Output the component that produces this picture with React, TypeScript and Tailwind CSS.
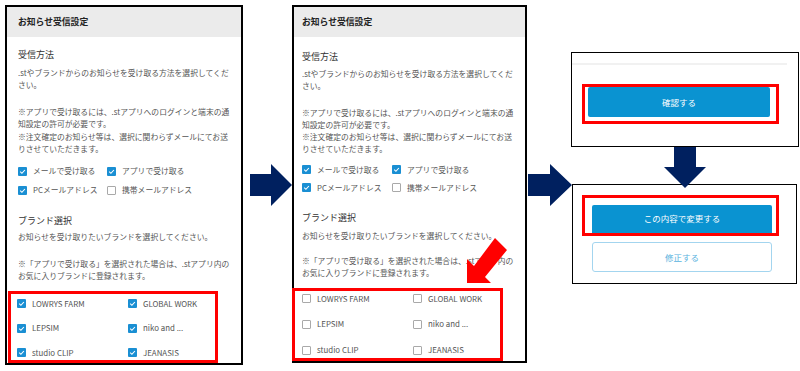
import React from 'react';

type PanelProps = {
  brandsChecked: boolean;
  compact?: boolean;
};

const font = { fontFamily: '"Noto Sans CJK JP", "Noto Sans", sans-serif' };

const CheckBox: React.FC<{ checked: boolean }> = ({ checked }) =>
  checked ? (
    <span className="flex h-[9px] w-[9px] shrink-0 items-center justify-center rounded-[1px] bg-[#1a8fd3]">
      <svg width="9" height="9" viewBox="0 0 9 9">
        <path d="M2.2 4.7 L3.9 6.3 L6.9 3" fill="none" stroke="#fff" strokeWidth="1.1" />
      </svg>
    </span>
  ) : (
    <span className="h-[9px] w-[9px] shrink-0 rounded-[1px] border border-[#a9a9a9] bg-white" />
  );

const Check: React.FC<{ checked: boolean; label: string }> = ({ checked, label }) => (
  <div className="flex items-center gap-[6px] whitespace-nowrap">
    <CheckBox checked={checked} />
    <span>{label}</span>
  </div>
);

const BRANDS = ['LOWRYS FARM', 'GLOBAL WORK', 'LEPSIM', 'niko and ...', 'studio CLIP', 'JEANASIS'];

const Panel: React.FC<PanelProps> = ({ brandsChecked, compact }) => (
  <div
    className={`mt-[5px] flex shrink-0 flex-col border-2 border-black bg-white text-[#555] ${
      compact ? 'h-[358px] w-[235px]' : 'h-[360px] w-[238px]'
    }`}
    style={font}
  >
    <div className={`flex h-[30px] items-center bg-[#ebebeb] text-[8.8px] font-bold text-[#222] ${compact ? 'pl-[8px]' : 'pl-[11px]'}`}>
      お知らせ受信設定
    </div>
    <div className={`flex flex-col whitespace-nowrap text-[7.8px] ${compact ? 'pl-[8px] leading-[12px]' : 'pl-[11px] leading-[12.5px]'}`}>
      <div className={`text-[9px] leading-[14px] text-[#333] ${compact ? 'mt-[13px]' : 'mt-[11px]'}`}>受信方法</div>
      <p className={compact ? 'mt-[4px]' : 'mt-[5px]'}>
        .stやブランドからのお知らせを受け取る方法を選択してくだ
        <br />
        さい。
      </p>
      <p className={compact ? 'mt-[15px]' : 'mt-[14px]'}>
        ※アプリで受け取るには、.stアプリへのログインと端末の通
        <br />
        知設定の許可が必要です。
        <br />
        ※注文確定のお知らせ等は、選択に関わらずメールにてお送
        <br />
        りさせていただきます。
      </p>
      <div className={`flex flex-col gap-[5px] ${compact ? 'mt-[8.5px]' : 'mt-[9px]'}`}>
        <div className={`flex items-center ${compact ? 'h-[13px]' : 'h-[14px]'}`}>
          <div className={compact ? 'w-[90px]' : 'w-[89px]'}>
            <Check checked label="メールで受け取る" />
          </div>
          <Check checked label="アプリで受け取る" />
        </div>
        <div className={`flex items-center ${compact ? 'h-[13px]' : 'h-[14px]'}`}>
          <div className={compact ? 'w-[90px]' : 'w-[89px]'}>
            <Check checked label="PCメールアドレス" />
          </div>
          <Check checked={false} label="携帯メールアドレス" />
        </div>
      </div>
      <div className={`text-[9px] leading-[14px] text-[#333] ${compact ? 'mt-[16.5px]' : 'mt-[16px]'}`}>ブランド選択</div>
      <p className={compact ? 'mt-[5px]' : 'mt-[3px]'}>お知らせを受け取りたいブランドを選択してください。</p>
      <p className={compact ? 'mt-[13px]' : 'mt-[14.5px]'}>
        ※「アプリで受け取る」を選択された場合は、.stアプリ内の
        <br />
        お気に入りブランドに登録されます。
      </p>
    </div>
    <div
      className={`relative grid grid-cols-[111px_1fr] gap-y-[10px] border-[3px] border-[#ff0000] text-[7.9px] leading-[14px] ${
        compact ? '-ml-[2px] mt-[9px] h-[74px] w-[211px] pl-[7px] pt-0' : 'ml-[1px] mt-[8px] h-[73px] w-[210px] pl-[6px] pt-[3px]'
      }`}
      style={font}
    >
      {BRANDS.map((b) => (
        <Check key={b} checked={brandsChecked} label={b} />
      ))}
    </div>
  </div>
);

const RightArrow: React.FC<{ w: number }> = ({ w }) => {
  const half = w / 2;
  return (
    <svg width={w} height="42" viewBox={`0 0 ${w} 42`}>
      <path d={`M0 10 H${half} V0 L${w} 21 L${half} 42 V32 H0 Z`} fill="#00205f" />
    </svg>
  );
};

const App: React.FC = () => {
  return (
    <div className="relative flex h-[371px] w-[800px] overflow-hidden bg-white pl-[5px]" style={font}>
      <Panel brandsChecked />

      <div className="w-[49px] shrink-0 pl-[7px] pt-[164px]">
        <RightArrow w={42} />
      </div>

      <Panel brandsChecked={false} compact />

      <div className="relative z-10 w-[44px] shrink-0 pl-[1px] pt-[164px]">
        <RightArrow w={44} />
      </div>

      <div className="flex w-[228px] shrink-0 flex-col pt-[52px]">
        <div className="h-[95px] border border-black bg-white">
          <div className="mr-[11px] mt-[10px] h-[2px] bg-[#f1f1f1]" />
          <div className="ml-[10px] mt-[19px] h-[40px] w-[197px] border-[3px] border-[#ff0000] pl-[3px] pr-[6px]">
            <div className="flex h-[30px] items-center justify-center rounded-[2px] bg-[#0a93d1] text-[8.5px] text-white">
              確認する
            </div>
          </div>
        </div>

        <div className="relative z-10 ml-[93px] h-[41px]">
          <svg width="42" height="41" viewBox="0 0 42 41">
            <path d="M10 0 H32 V20 H42 L21 41 L0 20 H10 Z" fill="#00205f" />
          </svg>
        </div>

        <div className="-mt-[4px] ml-[1px] h-[100px] w-[225px] border border-black bg-white">
          <div className="ml-[9px] mt-[10px] h-[41px] w-[197px] border-[3px] border-[#ff0000] pl-[7px] pr-[4px] pt-[7px]">
            <div className="flex h-[28px] items-center justify-center rounded-t-[2px] bg-[#0a93d1] pb-[2px] text-[8.5px] text-white">
              この内容で変更する
            </div>
          </div>
          <div className="ml-[19px] mt-[6px] flex h-[30px] w-[180px] items-center justify-center rounded-[3px] border border-[#a3d5ef] text-[8.5px] text-[#58b2de]">
            修正する
          </div>
        </div>
      </div>

      <svg className="absolute left-[460px] top-[230px]" width="60" height="60" viewBox="460 230 60 60">
        <path d="M467 283 L467 259 L474 266 L495 238 L507 250 L485 277 L491 283 Z" fill="#ff0000" />
      </svg>
    </div>
  );
};

export default App;
